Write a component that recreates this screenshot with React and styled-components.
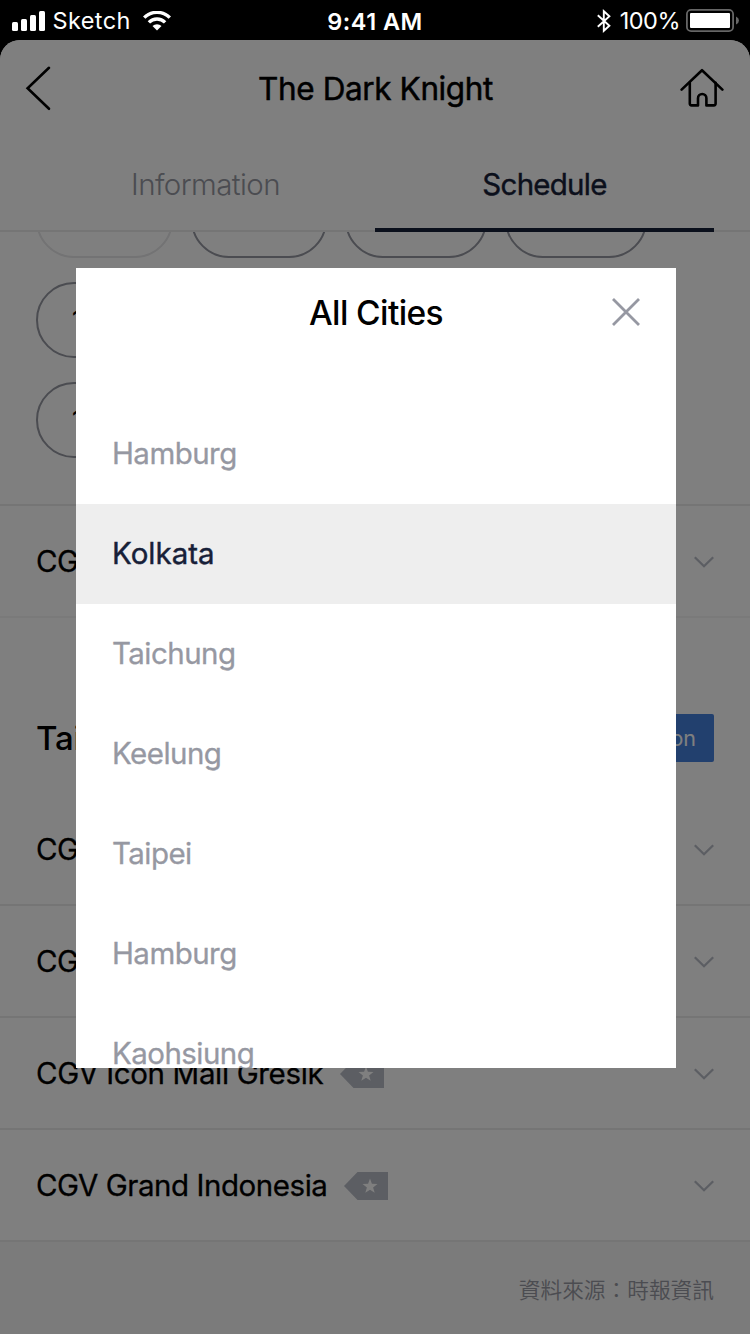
import React from "react";
import styled, { createGlobalStyle } from "styled-components";

const GlobalStyle = createGlobalStyle`
  *, *::before, *::after { box-sizing: border-box; }
  body {
    margin: 0;
    background: #000;
    font-family: Inter, "Noto Sans CJK TC", sans-serif;
  }
  button { font: inherit; border: 0; background: none; padding: 0; }
`;

const Screen = styled.div`
  width: 750px;
  height: 1334px;
  overflow: hidden;
  background: #000;
  display: flex;
  flex-direction: column;
`;

const StatusBar = styled.div`
  height: 40px;
  flex: none;
  display: grid;
  grid-template-columns: 1fr auto 1fr;
  align-items: center;
  padding: 1px 11px 0 12px;
  color: #fff;
  font-size: 23.5px;
  line-height: 28px;
`;

const StatusGroup = styled.div`
  display: flex;
  align-items: center;
  justify-content: ${(p) => (p.$end ? "flex-end" : "flex-start")};
  svg { display: block; flex: none; }
`;

const Carrier = styled.span`
  margin: 0 12.5px 0 7.5px;
  letter-spacing: 0.4px;
`;

const Clock = styled.span`
  font-weight: 600;
  letter-spacing: 0.5px;
  padding-top: 2px;
  margin-left: -1px;
`;

const Charge = styled.span`
  margin: 0 6px 0 9px;
  letter-spacing: -0.5px;
`;

const Page = styled.div`
  position: relative;
  flex: 1;
  display: flex;
  flex-direction: column;
  overflow: hidden;
  background: #fff;
  border-radius: 20px 20px 0 0;
`;

const Header = styled.header`
  height: 98px;
  flex: none;
  display: grid;
  grid-template-columns: 44px 1fr 44px;
  align-items: center;
  padding: 0 26px 2px 24px;
  svg { display: block; }
`;

const Title = styled.h1`
  margin: 0;
  padding-left: 3px;
  font-size: 31.5px;
  font-weight: 400;
  -webkit-text-stroke: 0.5px currentColor;
  letter-spacing: -0.4px;
  text-align: center;
`;

const Tabs = styled.nav`
  height: 94px;
  flex: none;
  display: flex;
  padding: 0 36px;
  box-shadow: inset 0 -2px #ebebeb;
`;

const Tab = styled.button`
  flex: 1;
  padding-bottom: 3px;
  font-size: 29.5px;
  letter-spacing: ${(p) => (p.$active ? -0.75 : -0.6)}px;
  font-weight: ${(p) => (p.$active ? 400 : 300)};
  -webkit-text-stroke: ${(p) => (p.$active ? 0.4 : 0)}px currentColor;
  color: ${(p) => (p.$active ? "#172038" : "#9698a2")};
  box-shadow: ${(p) => (p.$active ? "inset 0 -4px #172038" : "none")};
`;

const Content = styled.main`
  flex: 1;
  min-height: 0;
  overflow: hidden;
  display: flex;
  flex-direction: column;
`;

const Showtimes = styled.section`
  flex: none;
  margin-top: -50px;
  padding: 0 36px 46px;
  display: flex;
  flex-direction: column;
  gap: 24px;
  border-bottom: 2px solid #ebebeb;
`;

const PillRow = styled.div`
  display: flex;
  gap: 18px;
`;

const Pill = styled.span`
  width: ${(p) => p.$w}px;
  height: 76px;
  border: 2px solid ${(p) => (p.$past ? "#e6e6e8" : "#9698a2")};
  border-radius: 38px;
  display: flex;
  align-items: center;
  padding-left: 34px;
  font-size: 25px;
  font-weight: 500;
  color: ${(p) => (p.$past ? "#d0d0d4" : "#000")};
`;

const Theater = styled.div`
  height: 112px;
  flex: none;
  display: flex;
  align-items: center;
  padding: 1px 36px 0;
  border-bottom: 2px solid ${(p) => (p.$faint ? "#f4f4f4" : "#ebebeb")};
  svg { display: block; margin-top: 1px; }
  svg:last-child { margin-left: auto; }
`;

const TheaterName = styled.span`
  font-size: 29.5px;
  -webkit-text-stroke: 0.3px currentColor;
  letter-spacing: ${(p) => p.$tracking}px;
  margin-right: 17px;
  padding-bottom: 2px;
  white-space: nowrap;
`;

const CityBar = styled.div`
  height: 176px;
  flex: none;
  display: flex;
  align-items: flex-end;
  justify-content: space-between;
  padding: 0 36px 32px;
`;

const CityName = styled.h2`
  margin: 0;
  font-size: 33px;
  line-height: 48px;
  font-weight: 500;
  letter-spacing: -0.2px;
`;

const CityButton = styled.button`
  height: 48px;
  padding: 0 18px;
  border-radius: 2px;
  background: #4480dc;
  color: #fff;
  font-size: 21.5px;
`;

const Footer = styled.footer`
  flex: 1;
  padding: 31px 36px 0;
  background: #f6f6f6;
  color: #9698a2;
  font-family: "Noto Sans CJK TC", sans-serif;
  font-size: 21.7px;
  font-weight: 350;
  line-height: 32px;
  text-align: right;
`;

const Overlay = styled.div`
  position: absolute;
  inset: 0;
  background: rgba(0, 0, 0, 0.5);
  padding: 228px 74px 0 76px;
`;

const Modal = styled.section`
  height: 800px;
  overflow: hidden;
  background: #fff;
`;

const ModalHeader = styled.div`
  height: 88px;
  margin-bottom: 48px;
  display: grid;
  grid-template-columns: 28px 1fr 28px;
  align-items: center;
  padding: 0 36px;
  svg { display: block; }
`;

const ModalTitle = styled.h2`
  grid-column: 2;
  margin: 0;
  padding-top: 1px;
  font-size: 33.5px;
  font-weight: 500;
  letter-spacing: -0.6px;
  text-align: center;
`;

const City = styled.div`
  height: 100px;
  display: flex;
  align-items: center;
  padding: 0 36px 2px 36px;
  font-size: 29.5px;
  letter-spacing: ${(p) => (p.$selected ? 0 : -0.55)}px;
  -webkit-text-stroke: ${(p) => (p.$selected ? 0.4 : 0.3)}px currentColor;
  color: ${(p) => (p.$selected ? "#172038" : "#9698a2")};
  background: ${(p) => (p.$selected ? "#eee" : "transparent")};
`;

const Signal = () => (
  <svg width="33" height="20" fill="#fff">
    <rect x="0" y="11" width="6" height="9" rx="1.5" />
    <rect x="9" y="8" width="6" height="12" rx="1.5" />
    <rect x="18" y="4" width="6" height="16" rx="1.5" />
    <rect x="27" y="0" width="6" height="20" rx="1.5" />
  </svg>
);

const Wifi = () => (
  <svg width="28" height="20" viewBox="0 0 28 20">
    <g fill="none" stroke="#fff" strokeWidth="3.4">
      <path d="M1.2 6.6a18.2 18.2 0 0 1 25.6 0" />
      <path d="M5.9 11.4a11.5 11.5 0 0 1 16.2 0" />
    </g>
    <path d="M14 19.6l-4.5-4.5a6.4 6.4 0 0 1 9 0z" fill="#fff" />
  </svg>
);

const Bluetooth = () => (
  <svg width="14" height="24" viewBox="0 0 14 24" fill="none" stroke="#fff" strokeWidth="1.9">
    <path d="M0.8 6.3L12.4 16.7L6.8 21.8V2.2L12.4 7.3L0.8 17.7" />
  </svg>
);

const Battery = () => (
  <svg width="53" height="24" viewBox="0 0 53 24">
    <rect x="0.9" y="0.9" width="46.2" height="21.2" rx="4.2" fill="none" stroke="#666" strokeWidth="1.8" />
    <rect x="4" y="4" width="40" height="15" rx="1" fill="#fff" />
    <path d="M50 7.5q3 1.3 3 4t-3 4z" fill="#666" />
  </svg>
);

const Back = () => (
  <svg width="28" height="46" viewBox="0 0 28 46" fill="none" stroke="#000" strokeWidth="2.6" strokeLinecap="round">
    <path d="M25 2.8L3.6 23.2L25 43.8" />
  </svg>
);

const Home = () => (
  <svg width="44" height="44" viewBox="0 0 44 44" fill="none" stroke="#000" strokeWidth="2.6" strokeLinecap="round" strokeLinejoin="round">
    <path d="M1.6 23.6L22 4.2L42.4 23.6" />
    <path d="M9.8 16.8V37.6q0 1.8 1.8 1.8H18V32.2a4.2 4.2 0 0 1 8.4 0V39.4h7.4q1.8 0 1.8-1.8V16.8" />
  </svg>
);

const Close = () => (
  <svg width="28" height="28" viewBox="0 0 28 28" stroke="#9698a2" strokeWidth="2.8">
    <path d="M1 1L27 27M27 1L1 27" />
  </svg>
);

const Chevron = () => (
  <svg width="20" height="12" viewBox="0 0 20 12" fill="none" stroke="#b8bcc6" strokeWidth="2.3">
    <path d="M0.8 1.2L10 10.2L19.2 1.2" />
  </svg>
);

const StarTag = () => (
  <svg width="44" height="28" viewBox="0 0 44 28">
    <path d="M0 14L13.5 0H44V28H13.5z" fill="#b8bcc6" />
    <path
      d="M26 6.6l1.9 5.2 5.6.2-4.4 3.4 1.6 5.4-4.7-3.1-4.7 3.1 1.6-5.4-4.4-3.4 5.6-.2z"
      fill="#fff"
    />
  </svg>
);

const pillRows = [
  [
    { time: "10:40", w: 137, past: true },
    { time: "11:30", w: 136 },
    { time: "12:50", w: 142 },
    { time: "13:20", w: 142 },
  ],
  [{ time: "14:10", w: 137 }],
  [{ time: "16:50", w: 137 }],
];

const theaters = [
  { name: "CGV Central Park" },
  { name: "CGV Pacific Place" },
  { name: "CGV Icon Mall Gresik", starred: true, tracking: -0.35 },
  { name: "CGV Grand Indonesia", starred: true, tracking: -0.45 },
];

const cities = ["Hamburg", "Kolkata", "Taichung", "Keelung", "Taipei", "Hamburg", "Kaohsiung"];

const TheaterRow = ({ name, starred, faint, tracking = -0.5 }) => (
  <Theater $faint={faint}>
    <TheaterName $tracking={tracking}>{name}</TheaterName>
    {starred && <StarTag />}
    <Chevron />
  </Theater>
);

export default function App() {
  return (
    <Screen>
      <GlobalStyle />
      <StatusBar>
        <StatusGroup>
          <Signal />
          <Carrier>Sketch</Carrier>
          <Wifi />
        </StatusGroup>
        <Clock>9:41 AM</Clock>
        <StatusGroup $end>
          <Bluetooth />
          <Charge>100%</Charge>
          <Battery />
        </StatusGroup>
      </StatusBar>
      <Page>
        <Header>
          <Back />
          <Title>The Dark Knight</Title>
          <Home />
        </Header>
        <Tabs>
          <Tab>Information</Tab>
          <Tab $active>Schedule</Tab>
        </Tabs>
        <Content>
          <Showtimes>
            {pillRows.map((row, i) => (
              <PillRow key={i}>
                {row.map((p) => (
                  <Pill key={p.time} $w={p.w} $past={p.past}>
                    {p.time}
                  </Pill>
                ))}
              </PillRow>
            ))}
          </Showtimes>
          <TheaterRow name="CGV Grand Mall" faint />
          <CityBar>
            <CityName>Taichung</CityName>
            <CityButton>Location</CityButton>
          </CityBar>
          {theaters.map((t) => (
            <TheaterRow key={t.name} {...t} />
          ))}
          <Footer>資料來源：時報資訊</Footer>
        </Content>
        <Overlay>
          <Modal>
            <ModalHeader>
              <ModalTitle>All Cities</ModalTitle>
              <Close />
            </ModalHeader>
            {cities.map((c, i) => (
              <City key={i} $selected={i === 1}>
                {c}
              </City>
            ))}
          </Modal>
        </Overlay>
      </Page>
    </Screen>
  );
}
